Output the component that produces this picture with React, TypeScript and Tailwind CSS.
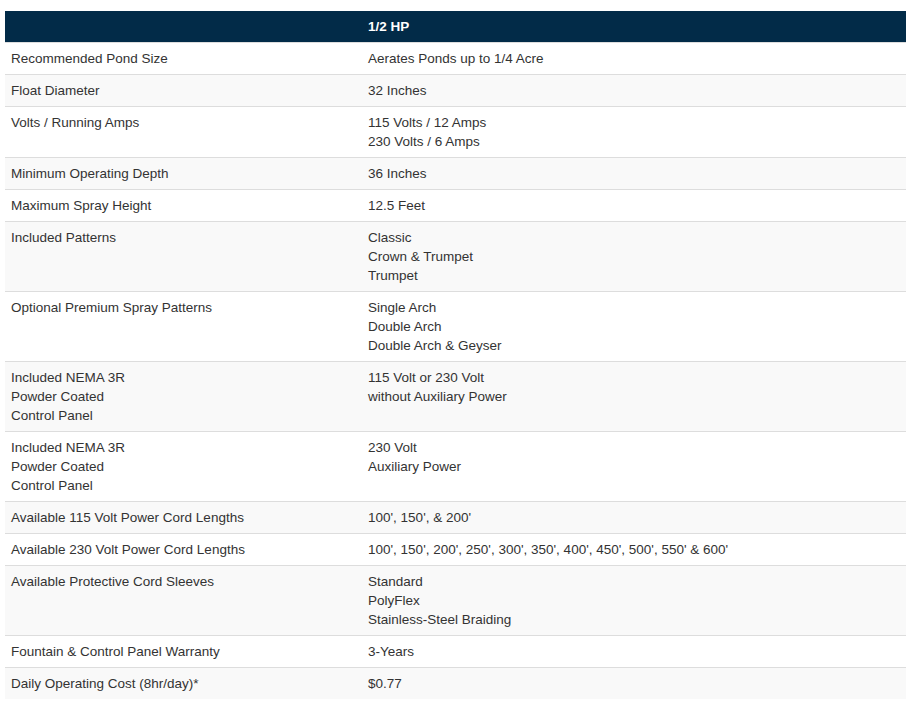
import React from 'react';

type Spec = { label: string[]; value: string[] };

const specs: Spec[] = [
  { label: ['Recommended Pond Size'], value: ['Aerates Ponds up to 1/4 Acre'] },
  { label: ['Float Diameter'], value: ['32 Inches'] },
  { label: ['Volts / Running Amps'], value: ['115 Volts / 12 Amps', '230 Volts / 6 Amps'] },
  { label: ['Minimum Operating Depth'], value: ['36 Inches'] },
  { label: ['Maximum Spray Height'], value: ['12.5 Feet'] },
  { label: ['Included Patterns'], value: ['Classic', 'Crown & Trumpet', 'Trumpet'] },
  {
    label: ['Optional Premium Spray Patterns'],
    value: ['Single Arch', 'Double Arch', 'Double Arch & Geyser'],
  },
  {
    label: ['Included NEMA 3R', 'Powder Coated', 'Control Panel'],
    value: ['115 Volt or 230 Volt', 'without Auxiliary Power'],
  },
  {
    label: ['Included NEMA 3R', 'Powder Coated', 'Control Panel'],
    value: ['230 Volt', 'Auxiliary Power'],
  },
  { label: ['Available 115 Volt Power Cord Lengths'], value: ["100', 150', & 200'"] },
  {
    label: ['Available 230 Volt Power Cord Lengths'],
    value: ["100', 150', 200', 250', 300', 350', 400', 450', 500', 550' & 600'"],
  },
  {
    label: ['Available Protective Cord Sleeves'],
    value: ['Standard', 'PolyFlex', 'Stainless-Steel Braiding'],
  },
  { label: ['Fountain & Control Panel Warranty'], value: ['3-Years'] },
  { label: ['Daily Operating Cost (8hr/day)*'], value: ['$0.77'] },
];

const Lines: React.FC<{ lines: string[] }> = ({ lines }) => (
  <>
    {lines.map((line, i) => (
      <div key={i}>{line}</div>
    ))}
  </>
);

const App: React.FC = () => {
  return (
    <div
      className="min-h-[711px] bg-white pl-[5px] pr-[10px] pt-[11px] text-[#333333]"
      style={{ fontFamily: '"Liberation Sans", Arial, sans-serif' }}
    >
      <table className="w-full border-collapse text-[13.5px] leading-[19px]">
        <thead>
          <tr className="bg-[#022b48] text-white">
            <th className="w-[357px] px-[6px] py-[6px] text-left font-bold" />
            <th className="px-[6px] py-[6px] text-left font-bold">1/2 HP</th>
          </tr>
        </thead>
        <tbody>
          {specs.map((row, i) => (
            <tr
              key={i}
              className={`border-t border-[#dddddd] align-top ${i % 2 === 1 ? 'bg-[#f9f9f9]' : 'bg-white'}`}
            >
              <td className="px-[6px] py-[6px]">
                <Lines lines={row.label} />
              </td>
              <td className="px-[6px] py-[6px]">
                <Lines lines={row.value} />
              </td>
            </tr>
          ))}
        </tbody>
      </table>
    </div>
  );
};

export default App;
